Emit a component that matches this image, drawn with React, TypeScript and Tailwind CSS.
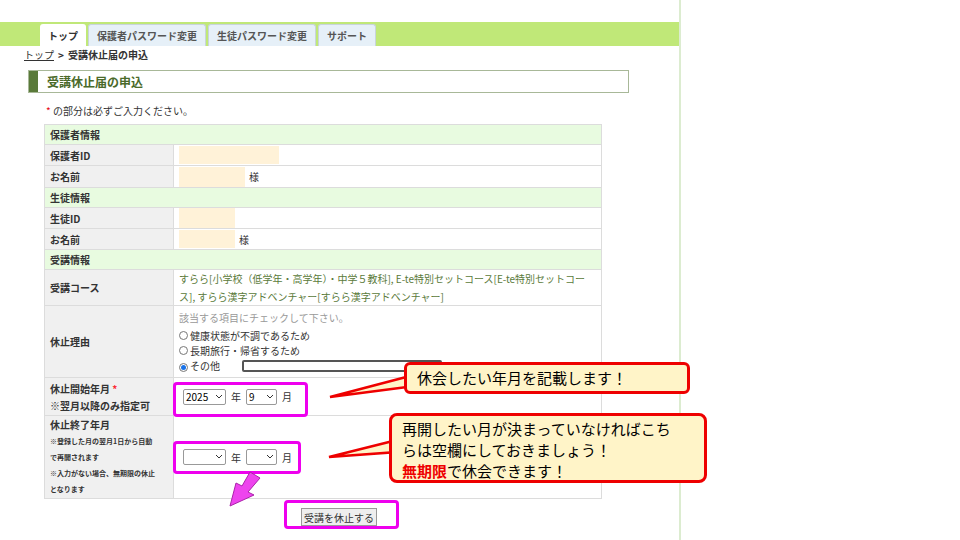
import React from "react";

const F = { fontFamily: '"Noto Sans CJK JP","Noto Sans",sans-serif' };

function Row({ label, h, children }: { label: React.ReactNode; h: string; children?: React.ReactNode }) {
  return (
    <div className={`flex border-b border-[#dcdcdc] ${h}`}>
      <div className="w-[129px] shrink-0 bg-[#f0f0f0] flex items-center px-[5px] text-[10px] font-bold text-[#333] border-r border-[#dcdcdc]">{label}</div>
      <div className="flex-1 bg-white flex items-center px-[5px] text-[10px] text-[#333]">{children}</div>
    </div>
  );
}
function Sec({ t }: { t: string }) {
  return <div className="h-[20px] bg-[#e8fbe0] border-b border-[#dcdcdc] flex items-center px-[5px] text-[10px] font-bold text-[#333]">{t}</div>;
}
function Sel({ v, w }: { v: string; w: string }) {
  return (
    <div className={`h-[16px] ${w} border border-[#999] rounded-[2px] bg-white flex items-center justify-between px-[2px] text-[10px] text-black`}>
      <span>{v}</span>
      <svg width="8" height="6" viewBox="0 0 8 6"><path d="M1 1l3 3 3-3" stroke="#333" fill="none" /></svg>
    </div>
  );
}
function Radio({ on }: { on?: boolean }) {
  return (
    <span className="inline-flex w-[9px] h-[9px] rounded-full border border-[#777] items-center justify-center mr-[2px] bg-white mt-[3px]">
      {on && <span className="w-[5px] h-[5px] rounded-full bg-[#1a73e8]" />}
    </span>
  );
}

export default function App() {
  return (
    <div className="relative w-[960px] h-[540px] bg-white overflow-hidden" style={F}>
      <div className="w-[681px] h-full border-r-2 border-[#dcecd0]">
        <div className="h-[22px]" />
        <div className="h-[24px] bg-[#c0e878] flex items-end pl-[40px] gap-[2px]">
          <div className="h-[22px] w-[46px] bg-white rounded-t-[3px] flex items-center justify-center text-[10px] font-bold text-[#333]">トップ</div>
          {["保護者パスワード変更", "生徒パスワード変更", "サポート"].map((t) => (
            <div key={t} className="h-[22px] px-[8px] bg-[#e6f0f8] border border-[#c8d4dc] border-b-0 rounded-t-[3px] flex items-center text-[10px] font-bold text-[#555]">{t}</div>
          ))}
        </div>
        <div className="pl-[24px] h-[16px] text-[10px] font-bold text-[#333] flex items-center">
          <span className="underline font-normal">トップ</span><span className="mx-[4px]">&gt;</span>受講休止届の申込
        </div>
        <div className="ml-[28px] mt-[8px] w-[601px] h-[23px] border border-[#a8b898] flex items-center">
          <div className="w-[9px] h-full bg-[#5a7a3a]" />
          <span className="ml-[9px] text-[12px] font-bold text-[#4a6a2a]">受講休止届の申込</span>
        </div>
        <div className="ml-[46px] mt-[10px] text-[10px] text-[#333]"><span className="text-red-600">*</span> の部分は必ずご入力ください。</div>
        <div className="ml-[44px] mt-[6px] w-[558px] border border-[#dcdcdc] border-b-0">
          <Sec t="保護者情報" />
          <Row label="保護者ID" h="h-[21px]"><div className="w-[100px] h-[18px] bg-[#fff2d8]" /></Row>
          <Row label="お名前" h="h-[22px]"><div className="w-[66px] h-[20px] bg-[#fff2d8] mr-[4px]" />様</Row>
          <Sec t="生徒情報" />
          <Row label="生徒ID" h="h-[21px]"><div className="w-[56px] h-[20px] bg-[#fff2d8]" /></Row>
          <Row label="お名前" h="h-[21px]"><div className="w-[56px] h-[18px] bg-[#fff2d8] mr-[4px]" />様</Row>
          <Sec t="受講情報" />
          <Row label="受講コース" h="h-[36px]">
            <span className="text-[#5a7a3a] leading-[18px] pr-[6px]">すらら[小学校（低学年・高学年）・中学５教科], E-te特別セットコース[E-te特別セットコース], すらら漢字アドベンチャー[すらら漢字アドベンチャー]</span>
          </Row>
          <Row label="休止理由" h="h-[72px]">
            <div className="flex flex-col leading-[15px] w-full">
              <span className="text-[#999] mb-[3px]">該当する項目にチェックして下さい。</span>
              <span className="flex"><Radio />健康状態が不調であるため</span>
              <span className="flex"><Radio />長期旅行・帰省するため</span>
              <span className="flex items-center"><Radio on />その他<span className="ml-[22px] w-[200px] h-[12px] border-2 border-[#555] rounded-[2px]" /></span>
            </div>
          </Row>
          <Row label={<div className="leading-[17px]">休止開始年月 <span className="text-red-500">*</span><br />※翌月以降のみ指定可</div>} h="h-[38px]">
            <div className="flex items-center gap-[5px] ml-[4px]"><Sel v="2025" w="w-[43px]" />年<Sel v="9" w="w-[31px]" />月</div>
          </Row>
          <Row label={<div className="leading-[16px]">休止終了年月<div className="text-[7px] leading-[16px]">※登録した月の翌月1日から自動<br />で再開されます<br />※入力がない場合、無期限の休止<br />となります</div></div>} h="h-[83px]">
            <div className="flex items-center gap-[5px] ml-[4px]"><Sel v="" w="w-[43px]" />年<Sel v="" w="w-[31px]" />月</div>
          </Row>
        </div>
        <div className="ml-[301px] mt-[9px] w-fit h-[18px] px-[2px] border border-[#999] bg-[#eee] text-[10px] text-[#333] flex items-center">受講を休止する</div>
      </div>

      <div className="absolute left-[173px] top-[382px] w-[135px] h-[35px] border-[3px] border-[#ee00ee] rounded-[4px]" />
      <div className="absolute left-[173px] top-[441px] w-[128px] h-[33px] border-[3px] border-[#ee00ee] rounded-[4px]" />
      <div className="absolute left-[284px] top-[500px] w-[115px] h-[29px] border-[3px] border-[#ee00ee] rounded-[4px]" />
      <svg className="absolute left-[220px] top-[470px]" width="50" height="40" viewBox="0 0 50 40">
        <polygon points="30,2 40,8 28,22 34,25 10,36 16,13 22,16" fill="#ee44ee" stroke="#aa22aa" strokeWidth="1" />
      </svg>

      <svg className="absolute left-[320px] top-[360px]" width="110" height="45" viewBox="0 0 110 45">
        <polygon points="90,16 10,37 95,26" fill="#fff4c8" stroke="#ee0000" strokeWidth="2.5" />
      </svg>
      <div className="absolute left-[404px] top-[362px] w-[286px] h-[32px] bg-[#fff4c8] border-[3px] border-[#ee0000] rounded-[6px] flex items-center pl-[10px] text-[15px] text-black">
        休会したい年月を記載します！
      </div>
      <svg className="absolute left-[325px] top-[430px]" width="80" height="40" viewBox="0 0 80 40">
        <polygon points="72,10 4,27 72,22" fill="#fff4c8" stroke="#ee0000" strokeWidth="2.5" />
      </svg>
      <div className="absolute left-[389px] top-[413px] w-[318px] h-[70px] bg-[#fff4c8] border-[3px] border-[#ee0000] rounded-[8px] pl-[10px] pr-[28px] pt-[2px] text-[15px] leading-[21px] text-black">
        再開したい月が決まっていなければこちらは空欄にしておきましょう！<br /><span className="text-[#ee0000] font-bold">無期限</span>で休会できます！
      </div>
    </div>
  );
}
